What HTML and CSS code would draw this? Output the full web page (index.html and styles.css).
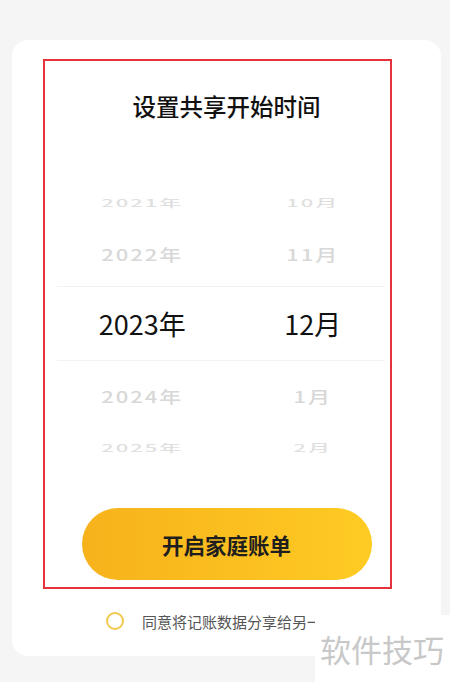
FILE: index.html
```html
<!DOCTYPE html>
<html lang="zh-CN">
<head>
  <meta charset="UTF-8">
  <meta name="viewport" content="width=device-width, initial-scale=1.0">
  <title>设置共享开始时间</title>
  <link rel="stylesheet" href="styles.css">
</head>
<body>
  <div class="card">
    <h1 class="title">设置共享开始时间</h1>

    <!-- Date picker wheel -->
    <div class="picker">
      <div class="row far first"><span>2021年</span><span>10月</span></div>
      <div class="row near"><span>2022年</span><span>11月</span></div>
      <div class="row current"><span>2023年</span><span>12月</span></div>
      <div class="row near after"><span>2024年</span><span>1月</span></div>
      <div class="row far"><span>2025年</span><span>2月</span></div>
    </div>

    <button type="button" class="start-btn">开启家庭账单</button>

    <label class="agree">
      <span class="radio"></span>
      <span class="agree-text">同意将记账数据分享给另一半成员</span>
    </label>
  </div>

  <!-- annotation + watermark -->
  <div class="highlight"></div>
  <div class="watermark">软件技巧</div>
</body>
</html>
```

FILE: styles.css
```css
body {
  margin: 0;
  padding: 40px 9px 0 12px;
  height: 682px;
  box-sizing: border-box;
  background-color: #f5f5f5;
  font-family: "Noto Sans CJK SC", "Noto Sans", sans-serif;
  position: relative;
  overflow: hidden;
}
.card {
  height: 616px;
  box-sizing: border-box;
  background: #fff;
  border-radius: 16px;
  padding-top: 50px;
}
.title {
  margin: 0;
  font-size: 23.5px;
  line-height: 32px;
  font-weight: 500;
  color: #111;
  text-align: center;
}
.picker {
  margin: 54px 43px 0 45px;
  display: flex;
  flex-direction: column;
}
.row {
  display: flex;
  align-items: center;
  height: 52px;
}
.row span {
  flex: 1;
  text-align: center;
}
.row.far span, .row.near span {
  font-size: 22px;
  font-weight: 500;
  letter-spacing: 2px;
  color: #d8d8d8;
}
.row.near span {
  transform: scaleY(0.72);
}
.row.far span {
  transform: scaleY(0.48);
  color: #e0e0e0;
}
.row.current {
  height: 75px;
  margin-top: 6px;
  background:
    linear-gradient(#f2f2f2, #f2f2f2) left top / calc(100% - 13px) 1px no-repeat,
    linear-gradient(#f2f2f2, #f2f2f2) left bottom / calc(100% - 13px) 1px no-repeat;
}
.row.current span {
  font-size: 27px;
  color: #111;
}
.row.near.after {
  height: 51px;
  margin-top: 9px;
}
.start-btn {
  display: block;
  margin: 35px auto 0;
  width: 290px;
  height: 72px;
  border: none;
  border-radius: 36px;
  background: linear-gradient(90deg, #f7b21b, #fecb24);
  font-family: inherit;
  font-size: 21.5px;
  font-weight: 700;
  color: #1e1e1e;
  cursor: pointer;
}
.agree {
  display: flex;
  align-items: center;
  gap: 18px;
  margin-top: 30px;
  padding-left: 94px;
  height: 22px;
  white-space: nowrap;
}
.radio {
  width: 18px;
  height: 18px;
  box-sizing: border-box;
  border: 2px solid #f2c84e;
  border-radius: 50%;
}
.agree-text {
  font-size: 15px;
  color: #555;
}
.highlight {
  position: absolute;
  left: 43px;
  top: 59px;
  width: 349px;
  height: 530px;
  box-sizing: border-box;
  border: 2px solid #e5333d;
}
.watermark {
  position: absolute;
  left: 315px;
  top: 615px;
  width: 135px;
  height: 67px;
  background: #fff;
  display: flex;
  align-items: center;
  padding-left: 5px;
  box-sizing: border-box;
  font-size: 31px;
  color: #c8c8c8;
  white-space: nowrap;
}
```
